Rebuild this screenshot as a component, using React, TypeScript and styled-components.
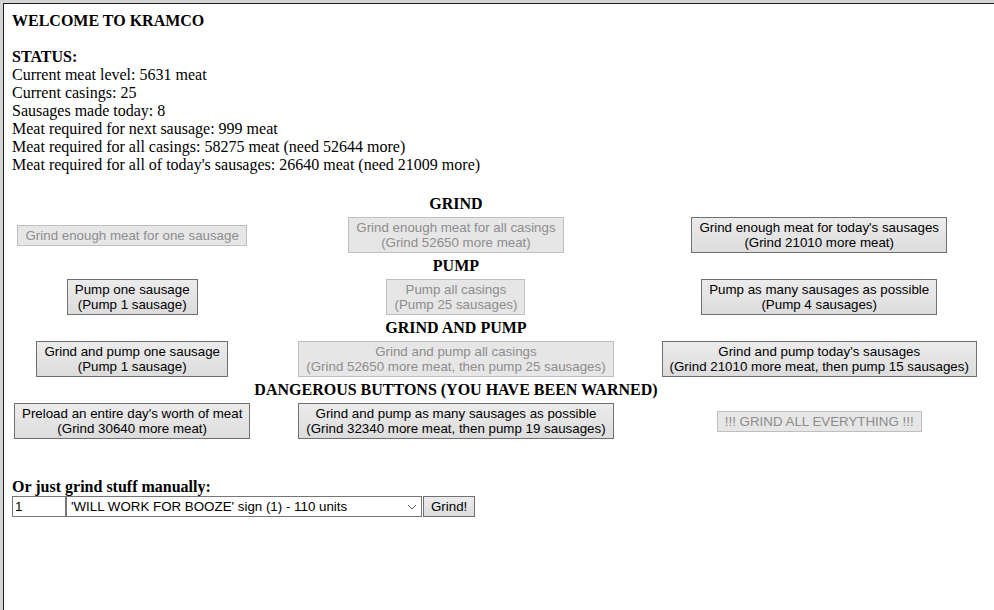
import { Fragment } from 'react';
import styled, { createGlobalStyle } from 'styled-components';

const GlobalStyle = createGlobalStyle`
  html, body {
    margin: 0;
    padding: 0;
    background: #d4d4d4;
  }
`;

const Frame = styled.div`
  margin: 3px 0 0 3px;
  height: calc(100vh - 3px);
  box-sizing: border-box;
  background: #fff;
  border-top: 1px solid #1e1e1e;
  border-left: 1px solid #1e1e1e;
  padding: 8px;
  font-family: "Liberation Serif", "Times New Roman", serif;
  font-size: 16px;
  line-height: 18px;
  color: #000;
`;

const Line = styled.div<{ $bold?: boolean; $gap?: number }>`
  font-weight: ${(p) => (p.$bold ? 'bold' : 'normal')};
  margin-top: ${(p) => p.$gap ?? 0}px;
`;

const ButtonGrid = styled.div`
  display: grid;
  grid-template-columns: repeat(3, max-content);
  column-gap: 4px;
  row-gap: 4px;
  margin: 21px 0 0 2px;
  align-items: center;
  justify-items: center;
`;

const SectionTitle = styled.div`
  grid-column: 2;
  font-weight: bold;
  text-align: center;
  line-height: 18px;
`;

const Button = styled.button<{ $col?: number }>`
  grid-column: ${(p) => p.$col ?? 'auto'};
  font-family: "Liberation Sans", Arial, sans-serif;
  font-size: 13.33px;
  line-height: 15px;
  padding: 2px 7px;
  border-radius: 0;
  border: 1px solid #707070;
  background: linear-gradient(#ececec, #dcdcdc);
  color: #000;
  white-space: nowrap;

  &:disabled {
    border-color: #bfbfbf;
    background: #e6e6e6;
    color: #8d8d8d;
  }
`;

const ManualRow = styled.div`
  display: flex;
  align-items: stretch;
  height: 21px;
`;

const Amount = styled.input`
  width: 54px;
  box-sizing: border-box;
  font-family: "Liberation Sans", Arial, sans-serif;
  font-size: 13.33px;
  border: 1px solid #767676;
  padding: 1px 2px;
  margin: 0;
`;

const ItemSelect = styled.div`
  width: 356px;
  box-sizing: border-box;
  border: 1px solid #767676;
  display: flex;
  align-items: center;
  justify-content: space-between;
  padding: 0 4px;
  font-family: "Liberation Sans", Arial, sans-serif;
  font-size: 13.33px;
  background: #fff;
`;

const GrindButton = styled(Button)`
  padding: 0 7px;
  margin-left: 1px;
`;

const rows: { title: string; buttons: { label: string[]; disabled?: boolean }[] }[] = [
  {
    title: 'GRIND',
    buttons: [
      { label: ['Grind enough meat for one sausage'], disabled: true },
      { label: ['Grind enough meat for all casings', '(Grind 52650 more meat)'], disabled: true },
      { label: ["Grind enough meat for today's sausages", '(Grind 21010 more meat)'] },
    ],
  },
  {
    title: 'PUMP',
    buttons: [
      { label: ['Pump one sausage', '(Pump 1 sausage)'] },
      { label: ['Pump all casings', '(Pump 25 sausages)'], disabled: true },
      { label: ['Pump as many sausages as possible', '(Pump 4 sausages)'] },
    ],
  },
  {
    title: 'GRIND AND PUMP',
    buttons: [
      { label: ['Grind and pump one sausage', '(Pump 1 sausage)'] },
      { label: ['Grind and pump all casings', '(Grind 52650 more meat, then pump 25 sausages)'], disabled: true },
      { label: ["Grind and pump today's sausages", '(Grind 21010 more meat, then pump 15 sausages)'] },
    ],
  },
  {
    title: 'DANGEROUS BUTTONS (YOU HAVE BEEN WARNED)',
    buttons: [
      { label: ["Preload an entire day's worth of meat", '(Grind 30640 more meat)'] },
      { label: ['Grind and pump as many sausages as possible', '(Grind 32340 more meat, then pump 19 sausages)'] },
      { label: ['!!! GRIND ALL EVERYTHING !!!'], disabled: true },
    ],
  },
];

function App() {
  return (
    <>
      <GlobalStyle />
      <Frame>
        <Line $bold>WELCOME TO KRAMCO</Line>
        <Line $bold $gap={18}>STATUS:</Line>
        <Line>Current meat level: 5631 meat</Line>
        <Line>Current casings: 25</Line>
        <Line>Sausages made today: 8</Line>
        <Line>Meat required for next sausage: 999 meat</Line>
        <Line>Meat required for all casings: 58275 meat (need 52644 more)</Line>
        <Line>Meat required for all of today's sausages: 26640 meat (need 21009 more)</Line>

        <ButtonGrid>
          {rows.map((row) => (
            <Fragment key={row.title}>
              <SectionTitle>{row.title}</SectionTitle>
              {row.buttons.map((b, i) => (
                <Button key={b.label[0]} $col={i + 1} disabled={b.disabled}>
                  {b.label[0]}
                  {b.label[1] && <br />}
                  {b.label[1]}
                </Button>
              ))}
            </Fragment>
          ))}
        </ButtonGrid>

        <Line $bold $gap={39}>Or just grind stuff manually:</Line>
        <ManualRow>
          <Amount defaultValue="1" />
          <ItemSelect>
            <span>'WILL WORK FOR BOOZE' sign (1) - 110 units</span>
            <svg width="10" height="6" viewBox="0 0 10 6">
              <path d="M1 1 L5 5 L9 1" fill="none" stroke="#555" strokeWidth="1" />
            </svg>
          </ItemSelect>
          <GrindButton>Grind!</GrindButton>
        </ManualRow>
      </Frame>
    </>
  );
}

export default App;
